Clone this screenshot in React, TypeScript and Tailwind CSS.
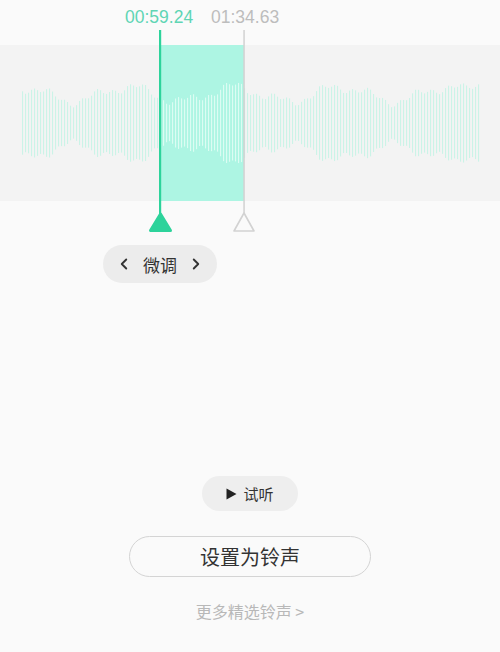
import { ChevronLeft, ChevronRight } from "lucide-react";

const cjk = { fontFamily: '"Noto Sans CJK SC", "Noto Sans", sans-serif' };

// pseudo waveform: half-heights for bars every 3px
const bars = Array.from({ length: 153 }, (_, i) => {
  const x = 22 + i * 3;
  const env =
    29 +
    7 * Math.sin(x / 17 + 0.4) +
    4 * Math.sin(x / 7.3 + 1.2) +
    2.5 * Math.sin(x * 1.7);
  const edge = x > 465 ? (x - 465) * 0.9 : 0;
  return { x, h: env + edge };
});

const Waveform = () => {
  return (
    <div className="relative h-[245px]">
      <div className="mt-[45px] h-[156px] bg-[#f3f3f3]" />
      <svg
        className="absolute inset-0"
        width="500"
        height="245"
        viewBox="0 0 500 245"
      >
        <rect x="161" y="45" width="83" height="156" fill="#adf5e3" />
        {bars.map((b) => {
          const inSel = b.x > 161 && b.x < 244;
          return (
            <rect
              key={b.x}
              x={b.x}
              y={123 - b.h}
              width="1.1"
              height={b.h * 2}
              fill={inSel ? "#dcfcf3" : "#cbf3e7"}
            />
          );
        })}
        <rect x="159" y="30" width="2.2" height="186" fill="#2dd39b" />
        <rect x="243.3" y="30" width="1.5" height="184" fill="#d2d2d2" />
        <path
          d="M160.5 214 L150.5 230.5 L170.5 230.5 Z"
          fill="#2dd39b"
          stroke="#2dd39b"
          strokeWidth="3"
          strokeLinejoin="round"
        />
        <path
          d="M244 213 L234 231 L254 231 Z"
          fill="#fafafa"
          stroke="#d2d2d2"
          strokeWidth="1.6"
          strokeLinejoin="round"
        />
      </svg>
      <span
        className="absolute left-[125px] top-[6px] text-[17.5px] leading-[22px] text-[#5fd5b4]"
        style={{ fontFamily: '"Liberation Sans", sans-serif' }}
      >
        00:59.24
      </span>
      <span
        className="absolute left-[211px] top-[6px] text-[17.5px] leading-[22px] text-[#bdbdbd]"
        style={{ fontFamily: '"Liberation Sans", sans-serif' }}
      >
        01:34.63
      </span>
    </div>
  );
};

const App = () => {
  return (
    <div className="w-[500px] h-[652px] bg-[#fafafa] flex flex-col overflow-hidden" style={cjk}>
      <Waveform />

      <div className="ml-[103px] w-[114px] h-[38px] rounded-full bg-[#ececec] flex items-center justify-between px-[12px] text-[#333]">
        <ChevronLeft className="w-[18px] h-[18px]" strokeWidth={2.5} />
        <span className="text-[17px] leading-none">微调</span>
        <ChevronRight className="w-[18px] h-[18px]" strokeWidth={2.5} />
      </div>

      <div className="mt-[193px] self-center w-[96px] h-[35px] rounded-full bg-[#eeeeee] flex items-center justify-center gap-[6px] text-[#333]">
        <svg width="11" height="12" viewBox="0 0 11 12">
          <path d="M0.5 0.5 L10.5 6 L0.5 11.5 Z" fill="#222" />
        </svg>
        <span className="text-[15px] leading-none">试听</span>
      </div>

      <button className="mt-[25px] self-center w-[242px] h-[41px] rounded-full border-[1.5px] border-[#d4d4d4] bg-[#fafafa] text-[20px] text-[#333] flex items-center justify-center">
        设置为铃声
      </button>

      <div className="mt-[26px] self-center text-[16px] text-[#b8b8b8] leading-none">
        更多精选铃声 &gt;
      </div>
    </div>
  );
};

export default App;
